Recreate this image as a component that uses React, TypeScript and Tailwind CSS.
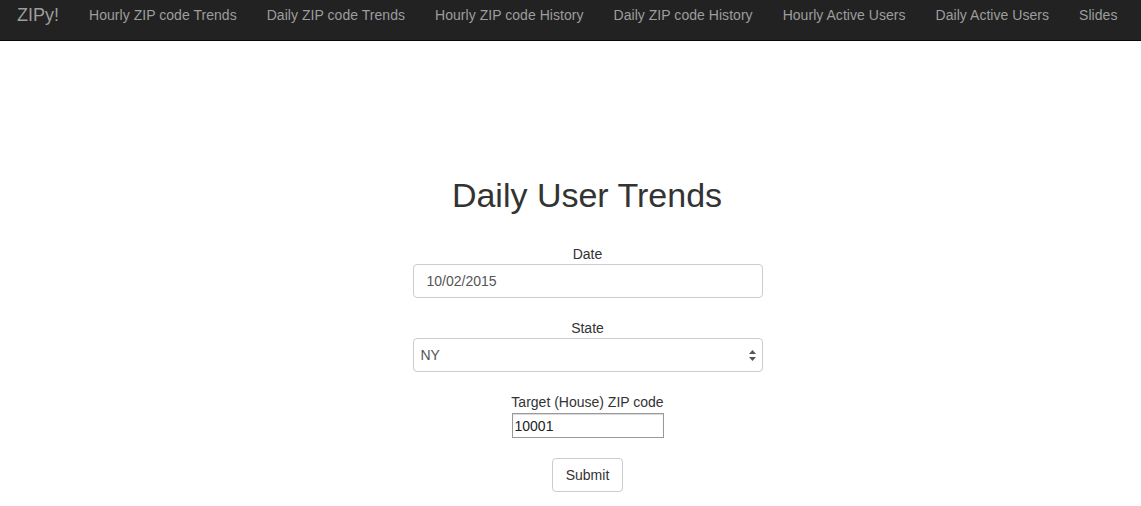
import React from 'react';

const navLinks = [
  'Hourly ZIP code Trends',
  'Daily ZIP code Trends',
  'Hourly ZIP code History',
  'Daily ZIP code History',
  'Hourly Active Users',
  'Daily Active Users',
  'Slides',
];

const font = { fontFamily: '"Liberation Sans", Helvetica, Arial, sans-serif' };

const App: React.FC = () => {
  return (
    <div className="min-h-screen bg-white text-[14px] text-[#333]" style={font}>
      <nav className="flex h-[41px] items-start border-b border-[#080808] bg-[#222] pt-[5px]">
        <a className="pl-[17px] pr-[15px] text-[18px] leading-[20px] text-[#9d9d9d]">ZIPy!</a>
        {navLinks.map((label) => (
          <a key={label} className="px-[15px] text-[14px] leading-[20px] tracking-[0.04px] text-[#9d9d9d]">
            {label}
          </a>
        ))}
      </nav>

      <div className="flex flex-col items-center pt-[134px] pl-[33px]">
        <h1 className="text-[34px] leading-[40px] font-normal text-[#333] tracking-[0px]">Daily User Trends</h1>

        <form className="mt-[29px] flex flex-col items-center pl-[1px]" onSubmit={(e) => e.preventDefault()}>
          <label className="leading-[20px]">Date</label>
          <input
            defaultValue="10/02/2015"
            className="h-[34px] w-[350px] rounded-[4px] border border-[#ccc] px-[13px] text-[14px] text-[#555] outline-none"
          />

          <label className="mt-[20px] leading-[20px]">State</label>
          <div className="relative">
            <select
              defaultValue="NY"
              className="h-[34px] w-[350px] appearance-none rounded-[4px] border border-[#ccc] bg-white px-[7px] text-[14px] text-[#555] outline-none"
              style={font}
            >
              <option value="NY">NY</option>
            </select>
            <svg
              className="pointer-events-none absolute right-[7px] top-[12px]"
              width="7"
              height="11"
              viewBox="0 0 7 11"
            >
              <path d="M3.5 0 L7 4 L0 4 Z" fill="#555" />
              <path d="M3.5 11 L7 7 L0 7 Z" fill="#555" />
            </svg>
          </div>

          <label className="mt-[20px] leading-[20px]">Target (House) ZIP code</label>
          <input
            defaultValue="10001"
            className="mt-[1px] h-[25px] w-[152px] border border-[#999] px-[2px] text-[14px] text-[#222] outline-none shadow-[inset_0_1px_1px_rgba(0,0,0,0.15)]"
          />

          <button
            type="submit"
            className="mt-[20px] h-[34px] w-[71px] rounded-[4px] border border-[#ccc] bg-white text-[14px] text-[#333]"
          >
            Submit
          </button>
        </form>
      </div>
    </div>
  );
};

export default App;
